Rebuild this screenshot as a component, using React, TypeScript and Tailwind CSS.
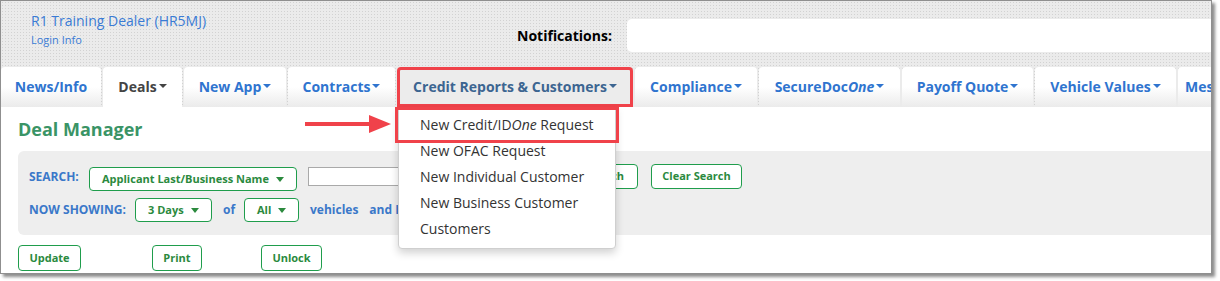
import React from 'react';

type Tab = { label: React.ReactNode; w: string; caret: boolean; kind?: 'active' | 'open' | 'last' };

const tabs: Tab[] = [
  { label: 'News/Info', w: 'w-[100px]', caret: false },
  { label: 'Deals', w: 'w-[79px]', caret: true, kind: 'active' },
  { label: 'New App', w: 'w-[102px]', caret: true },
  { label: 'Contracts', w: 'w-[107px]', caret: true },
  { label: 'Credit Reports & Customers', w: 'w-[236px]', caret: true, kind: 'open' },
  { label: 'Compliance', w: 'w-[122px]', caret: true },
  { label: <>SecureDoc<i>One</i></>, w: 'w-[141px]', caret: true },
  { label: 'Payoff Quote', w: 'w-[131px]', caret: true },
  { label: 'Vehicle Values', w: 'w-[141px]', caret: true },
  { label: 'Messages', w: 'w-[120px]', caret: true, kind: 'last' },
];

const menuItems: React.ReactNode[] = [
  <>New Credit/ID<i>One</i> Request</>,
  'New OFAC Request',
  'New Individual Customer',
  'New Business Customer',
  'Customers',
];

function Caret() {
  return (
    <span className="inline-block w-0 h-0 ml-[2px] border-x-[4px] border-x-transparent border-t-[4px] border-t-current align-middle" />
  );
}

function GreenSelect({ label, w }: { label: string; w: string }) {
  return (
    <div className={`${w} h-[24px] flex items-center justify-between pl-[12px] pr-[12px] border border-[#1f9d4c] rounded-[4px] bg-white text-[11px] font-bold text-[#2b8a3e] whitespace-nowrap`}>
      <span>{label}</span>
      <span className="inline-block w-0 h-0 border-x-[4px] border-x-transparent border-t-[5px] border-t-[#2b8a3e]" />
    </div>
  );
}

function GreenButton({ children, w, className = '' }: { children: React.ReactNode; w: string; className?: string }) {
  return (
    <button className={`${w} h-[26px] border border-[#1f9d4c] rounded-[4px] bg-white text-[11px] font-bold text-[#2b8a3e] whitespace-nowrap ${className}`}>
      {children}
    </button>
  );
}

export default function App() {
  return (
    <div className="w-[1220px] h-[281px] bg-white font-['Open_Sans',sans-serif]">
      <div className="relative w-[1212px] h-[274px] border border-[#8f8f8f] shadow-[3px_3px_3px_rgba(0,0,0,0.45)] overflow-hidden bg-white">
        {/* Header + nav on textured background */}
        <div className="bg-[#ebebeb] bg-[image:radial-gradient(circle,#d2d2d2_0.8px,transparent_0.9px)] bg-[length:3px_3px]">
          <div className="h-[66px] flex">
            <div className="w-[516px] shrink-0 pl-[30px] pt-[10px]">
              <div className="text-[14px] leading-[20px] text-[#3a7bd5]">R1 Training Dealer (HR5MJ)</div>
              <div className="mt-[2px] text-[11px] leading-[14px] text-[#3a7bd5]">Login Info</div>
            </div>
            <div className="flex-1 flex items-start pt-[18px]">
              <span className="mt-[7px] text-[14px] leading-[20px] font-bold text-black">Notifications:</span>
              <div className="ml-[15px] flex-1 h-[33px] rounded-l-[5px] bg-white" />
            </div>
          </div>

          <div className="h-[40px] flex gap-[2px] whitespace-nowrap">
            {tabs.map((t, i) => (
              <div
                key={i}
                className={`${t.w} shrink-0 h-[40px] pb-[2px] flex items-center rounded-t-[4px] text-[14px] font-bold ${
                  t.kind === 'active'
                    ? 'justify-center bg-white text-[#444444]'
                    : t.kind === 'open'
                    ? 'justify-center bg-[#ececec] text-[#3c6591] border-[3px] border-[#f0424a] rounded-none'
                    : t.kind === 'last'
                    ? 'justify-start pl-[7px] bg-gradient-to-b from-white via-white to-[#ebebeb] text-[#2f74cf]'
                    : 'justify-center bg-gradient-to-b from-white via-white to-[#ebebeb] text-[#2f74cf]'
                }`}
              >
                <span>{t.label}</span>
                {t.caret && <Caret />}
              </div>
            ))}
          </div>
        </div>

        {/* Deal manager content */}
        <div className="pl-[17px] pt-[10px]">
          <h1 className="text-[18px] leading-[24px] font-bold text-[#3a9466]">Deal Manager</h1>

          <div className="mt-[10px] h-[84px] rounded-l-[6px] bg-[#eeeeee] pl-[11px] pt-[13px]">
            <div className="flex items-start h-[25px]">
              <span className="w-[60px] mt-[5px] text-[12px] leading-[16px] font-bold text-[#3a78c9]">SEARCH:</span>
              <div className="mt-[3px]">
                <GreenSelect label="Applicant Last/Business Name" w="w-[208px]" />
              </div>
              <div className="ml-[11px] mt-[3px] w-[252px] h-[19px] border border-[#a9a9a9] bg-white" />
              <GreenButton w="w-[65px]" className="ml-[13px] !h-[25px]">Search</GreenButton>
              <GreenButton w="w-[91px]" className="ml-[13px] !h-[25px]">Clear Search</GreenButton>
            </div>
            <div className="flex items-center h-[24px] mt-[9px] text-[12px] font-bold text-[#3a78c9] whitespace-nowrap">
              <span className="w-[106px]">NOW SHOWING:</span>
              <GreenSelect label="3 Days" w="w-[77px]" />
              <span className="ml-[11px] w-[21px]">of</span>
              <GreenSelect label="All" w="w-[55px]" />
              <span className="ml-[11px]">vehicles</span>
              <span className="ml-[11px]">and Last Updated</span>
            </div>
          </div>

          <div className="flex mt-[10px]">
            <GreenButton w="w-[63px]">Update</GreenButton>
            <GreenButton w="w-[50px]" className="ml-[71px]">Print</GreenButton>
            <GreenButton w="w-[61px]" className="ml-[59px]">Unlock</GreenButton>
          </div>
        </div>

        {/* Dropdown menu */}
        <div className="absolute left-[397px] top-[106px] w-[218px] border border-[#cfcfcf] rounded-b-[4px] bg-white shadow-[0_4px_8px_rgba(0,0,0,0.18)] pt-[3px] pb-[7px] pl-[21px]">
          {menuItems.map((m, i) => (
            <div key={i} className="h-[26px] flex items-center text-[14px] text-[#333333] whitespace-nowrap">
              <span>{m}</span>
            </div>
          ))}
        </div>
        <div className="absolute left-[394px] top-[106px] w-[224px] h-[36px] border-[3px] border-[#f0424a]" />

        {/* Pointer arrow */}
        <svg className="absolute left-[304px] top-[113px]" width="86" height="20" viewBox="0 0 86 20">
          <rect x="0" y="8" width="66" height="4" fill="#f0424a" />
          <polygon points="64,1 86,10 64,19" fill="#f0424a" />
        </svg>
      </div>
    </div>
  );
}
